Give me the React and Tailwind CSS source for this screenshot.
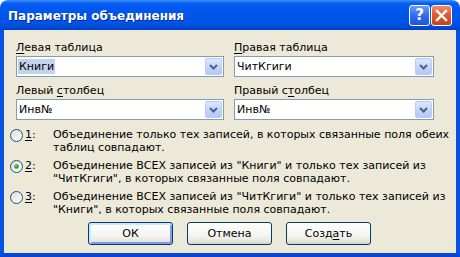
import React from 'react';

function Combo({ value, selected, width }) {
  return (
    <div className={`flex h-[21px] ${width} items-center border border-[#7F9DB9] bg-white`}>
      <span className={`ml-[1px] pl-[1px] pr-[1px] leading-[15px] ${selected ? 'bg-[#C3D3EE]' : ''}`}>{value}</span>
      <div className="ml-auto mr-[1px] flex h-[17px] w-[17px] items-center justify-center rounded-[2px] border border-[#B9CCF5] bg-[linear-gradient(to_bottom,#DCE6FD,#C1D3FB_60%,#B4C8F6)]">
        <svg width="9" height="6" viewBox="0 0 9 6">
          <path d="M1 1 L4.5 4.5 L8 1" fill="none" stroke="#4D6185" strokeWidth="2" />
        </svg>
      </div>
    </div>
  );
}

function Radio({ checked, id }) {
  return (
    <svg width="13" height="13" viewBox="0 0 13 13" className="mt-[1px] shrink-0">
      <defs>
        <linearGradient id={`rg${id}`} x1="0" y1="0" x2="1" y2="1">
          <stop offset="0" stopColor="#DCDCD5" />
          <stop offset="1" stopColor="#FFFFFF" />
        </linearGradient>
      </defs>
      <circle cx="6.5" cy="6.5" r="6" fill={`url(#rg${id})`} stroke="#1C5180" strokeWidth="1" />
      {checked && <circle cx="6.5" cy="6.5" r="2.3" fill="#21A121" />}
      {checked && <circle cx="6" cy="6" r="0.9" fill="#7CD87C" />}
    </svg>
  );
}

function Option({ num, checked, lines }) {
  return (
    <div className="flex items-start leading-[13px]">
      <Radio checked={checked} id={num} />
      <span className="ml-[2px] w-[28px]"><span className="underline underline-offset-[2px]">{num}</span>:</span>
      <span className="whitespace-nowrap">
        {lines[0]}
        <br />
        {lines[1]}
      </span>
    </div>
  );
}

function XpButton({ children, isDefault }) {
  return (
    <button
      className={`h-[23px] w-[85px] rounded-[3px] border border-[#003C74] bg-[linear-gradient(to_bottom,#FFFFFF,#F4F4F0_60%,#E6E3DA_88%,#D6D0C5)] text-[11px] leading-[21px] text-black ${
        isDefault ? 'shadow-[inset_1px_1px_0_1px_#CEE7FF,inset_-1px_-1px_0_1px_#7D9CEB]' : ''
      }`}
    >
      {children}
    </button>
  );
}

export default function App() {
  return (
    <div className="h-[257px] w-[460px] bg-white font-['DejaVu_Sans',sans-serif] text-[11px] text-black">
      <div className="flex h-full flex-col overflow-hidden rounded-t-[8px]">
        {/* title bar */}
        <div className="flex h-[30px] shrink-0 items-center bg-[linear-gradient(to_bottom,#3D95FF,#0A5FF2_10%,#0058EE_25%,#0054E6_75%,#0049D8_92%,#003DC4)] pl-[8px] pr-[8px]">
          <span className="mt-[1px] text-[12px] font-bold text-white [text-shadow:1px_1px_0_#0A2A8A]">
            Параметры объединения
          </span>
          <div className="ml-auto flex gap-[1px]">
            <div className="flex h-[21px] w-[21px] items-center justify-center rounded-[3px] border border-white bg-[linear-gradient(to_bottom,#6B9BFF,#2F6CF2_50%,#1E56DD)] text-[15px] font-bold leading-none text-white">
              ?
            </div>
            <div className="flex h-[21px] w-[21px] items-center justify-center rounded-[3px] border border-white bg-[linear-gradient(to_bottom,#F08C6C,#E05A32_45%,#C8401C)]">
              <svg width="13" height="13" viewBox="0 0 13 13">
                <path d="M2 2 L11 11 M11 2 L2 11" stroke="white" strokeWidth="2.4" strokeLinecap="square" />
              </svg>
            </div>
          </div>
        </div>

        {/* body */}
        <div className="flex flex-1 flex-col border-x-[4px] border-b-[4px] border-x-[#0852E0] border-b-[#0845D2] bg-[#ECE9D8]">
          <div className="flex gap-[10px] pl-[12px] pt-[11px]">
            <div className="flex flex-col">
              <div className="mb-[2px] leading-[13px]"><span className="underline underline-offset-[2px]">Л</span>евая таблица</div>
              <Combo value="Книги" selected width="w-[208px]" />
              <div className="mb-[2px] mt-[7px] leading-[13px]">Левый <span className="underline underline-offset-[2px]">с</span>толбец</div>
              <Combo value="Инв№" width="w-[208px]" />
            </div>
            <div className="flex flex-col">
              <div className="mb-[2px] leading-[13px]"><span className="underline underline-offset-[2px]">П</span>равая таблица</div>
              <Combo value="ЧитКгиги" width="w-[200px]" />
              <div className="mb-[2px] mt-[7px] leading-[13px]">Правый с<span className="underline underline-offset-[2px]">т</span>олбец</div>
              <Combo value="Инв№" width="w-[200px]" />
            </div>
          </div>

          <div className="mt-[8px] flex flex-col gap-[5px] pl-[6px]">
            <Option
              num="1"
              lines={['Объединение только тех записей, в которых связанные поля обеих', 'таблиц совпадают.']}
            />
            <Option
              num="2"
              checked
              lines={['Объединение ВСЕХ записей из "Книги" и только тех записей из', '"ЧитКгиги", в которых связанные поля совпадают.']}
            />
            <Option
              num="3"
              lines={['Объединение ВСЕХ записей из "ЧитКгиги" и только тех записей из', '"Книги", в которых связанные поля совпадают.']}
            />
          </div>

          <div className="mt-[6px] flex gap-[14px] pl-[84px]">
            <XpButton isDefault>ОК</XpButton>
            <XpButton>Отмена</XpButton>
            <XpButton>
              Созд<span className="underline underline-offset-[2px]">а</span>ть
            </XpButton>
          </div>
        </div>
      </div>
    </div>
  );
}
